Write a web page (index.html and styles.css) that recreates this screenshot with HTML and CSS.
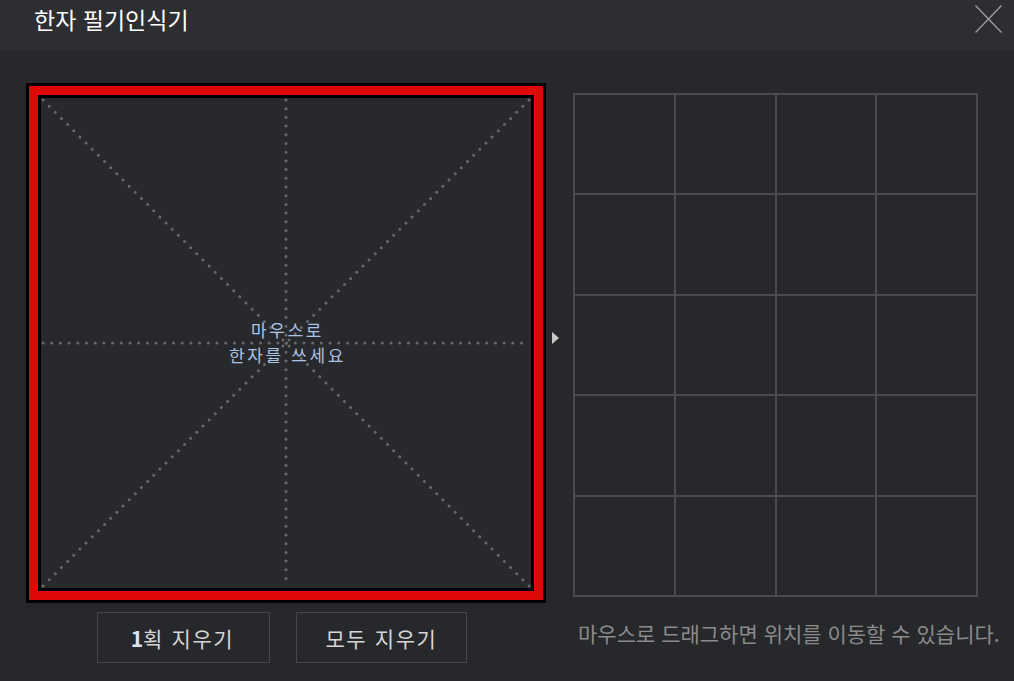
FILE: index.html
```html
<!DOCTYPE html>
<html lang="ko">
<head>
<meta charset="utf-8">
<title>한자 필기인식기</title>
<link rel="stylesheet" href="styles.css">
</head>
<body>
<div class="window">
  <header class="titlebar">
    <h1 class="title">한자 필기인식기</h1>
    <svg class="close" width="27" height="28" viewBox="0 0 27 28" aria-label="닫기">
      <line x1="0.5" y1="0.5" x2="26.5" y2="27.5" />
      <line x1="26.5" y1="0.5" x2="0.5" y2="27.5" />
    </svg>
  </header>
  <main class="main">
    <section class="left">
      <div class="canvas-frame">
        <div class="canvas">
          <svg class="guides" width="490" height="490" viewBox="0 0 490 490">
            <line x1="2" y1="2" x2="488" y2="488" />
            <line x1="488" y1="2" x2="2" y2="488" />
            <line x1="2" y1="245" x2="488" y2="245" />
            <line x1="245" y1="2" x2="245" y2="488" />
          </svg>
          <div class="hint">
            <span class="hint-line">마우스로</span>
            <span class="hint-line">한자를 쓰세요</span>
          </div>
        </div>
      </div>
      <div class="buttons">
        <button class="btn btn-stroke"><b class="num">1</b>획 지우기</button>
        <button class="btn btn-all">모두 지우기</button>
      </div>
    </section>
    <div class="arrow"></div>
    <section class="right">
      <div class="results">
        <div class="cell"></div><div class="cell"></div><div class="cell"></div><div class="cell"></div>
        <div class="cell"></div><div class="cell"></div><div class="cell"></div><div class="cell"></div>
        <div class="cell"></div><div class="cell"></div><div class="cell"></div><div class="cell"></div>
        <div class="cell"></div><div class="cell"></div><div class="cell"></div><div class="cell"></div>
        <div class="cell"></div><div class="cell"></div><div class="cell"></div><div class="cell"></div>
      </div>
      <p class="caption">마우스로 드래그하면 위치를 이동할 수 있습니다.</p>
    </section>
  </main>
</div>
</body>
</html>
```

FILE: styles.css
```css
html, body {
  margin: 0;
  padding: 0;
}
body {
  width: 1014px;
  height: 681px;
  overflow: hidden;
  background: #27282b;
  font-family: "Noto Sans CJK KR", "Noto Sans", sans-serif;
}
.window {
  width: 1014px;
  height: 681px;
}
.titlebar {
  height: 50px;
  background: #2d2e32;
  display: flex;
  justify-content: space-between;
  align-items: flex-start;
  padding: 0 12px 0 34px;
  box-sizing: border-box;
}
.title {
  margin: 0;
  padding-top: 8px;
  font-size: 23px;
  line-height: 1;
  font-weight: normal;
  color: #ffffff;
}
.close {
  margin-top: 5px;
}
.close line {
  stroke: #9a9a9a;
  stroke-width: 1.4;
}
.main {
  display: flex;
  align-items: flex-start;
  padding: 33px 0 0 26px;
}
.left {
  width: 520px;
}
.canvas-frame {
  border: 3px solid #000;
  background: #e00707;
  padding: 9px;
}
.canvas {
  border: 3px solid #000;
  width: 490px;
  height: 490px;
  background: #28292c;
  position: relative;
  display: flex;
  align-items: center;
  justify-content: center;
}
.guides {
  position: absolute;
  left: 0;
  top: 0;
}
.guides line {
  stroke: #68696c;
  stroke-width: 3;
  stroke-linecap: round;
  stroke-dasharray: 0 8.7;
}
.hint {
  position: relative;
  display: flex;
  flex-direction: column;
  align-items: center;
  margin-left: 3px;
  color: #a9c3e6;
}
.hint-line {
  display: block;
  font-size: 17px;
  line-height: 24.6px;
  letter-spacing: 2.6px;
  white-space: nowrap;
}
.buttons {
  display: flex;
  gap: 26px;
  margin-top: 9px;
  padding-left: 71px;
}
.btn {
  height: 51px;
  border: 1px solid #454649;
  background: #27282b;
  color: #d6d6d6;
  font-family: "Noto Sans CJK KR", "Noto Sans", sans-serif;
  font-size: 21px;
  letter-spacing: 1.6px;
  padding: 0;
  display: flex;
  align-items: center;
  justify-content: center;
  box-sizing: border-box;
}
.btn-stroke {
  width: 173px;
  padding-right: 2px;
}
.btn-all {
  width: 171px;
}
.num {
  color: #dbe5f5;
  font-weight: bold;
  letter-spacing: 0;
}
.arrow {
  width: 0;
  height: 0;
  margin: 249px 0 0 6px;
  border-left: 7px solid #c8c8c8;
  border-top: 6px solid transparent;
  border-bottom: 6px solid transparent;
}
.right {
  margin: 10px 0 0 14px;
}
.results {
  display: grid;
  grid-template-columns: repeat(4, 100.75px);
  grid-template-rows: repeat(5, 100.4px);
  border-left: 2px solid #4a4b4d;
  border-top: 2px solid #4a4b4d;
  width: max-content;
}
.cell {
  border-right: 2px solid #4a4b4d;
  border-bottom: 2px solid #4a4b4d;
}
.caption {
  margin: 25px 0 0 0;
  padding-left: 5px;
  font-size: 21px;
  line-height: 23px;
  color: #8b8b8b;
  white-space: nowrap;
}
```
